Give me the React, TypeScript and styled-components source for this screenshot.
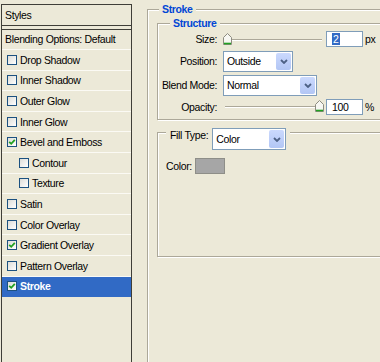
import React from 'react';
import styled, { createGlobalStyle } from 'styled-components';

const GlobalStyle = createGlobalStyle`
  html, body {
    margin: 0;
    padding: 0;
    background: #ece9d8;
  }
  body {
    font-family: "Liberation Sans", Arial, sans-serif;
    font-size: 10.5px;
    letter-spacing: -0.35px;
    color: #000;
  }
`;

const Window = styled.div`
  display: flex;
  width: 380px;
  height: 362px;
  overflow: hidden;
  background: #ece9d8;
`;

/* left list of layer styles */

const StylesPanel = styled.div`
  flex: 0 0 auto;
  box-sizing: border-box;
  width: 131px;
  margin: 4px 0 0 1px;
  border: 1px solid #3f3e38;
  border-bottom: none;
  display: flex;
  flex-direction: column;
`;

const PanelHeader = styled.div`
  height: 20px;
  line-height: 20px;
  padding-left: 3px;
  border-bottom: 1px solid #3f3e38;
`;

const BlendingRow = styled.div`
  height: 19px;
  line-height: 19px;
  padding-left: 3px;
  margin-top: 3px;
  border-top: 1px solid #3f3e38;
  border-bottom: 1px solid #fbfaf4;
`;

const StyleRow = styled.div<{ $indent?: boolean; $selected?: boolean }>`
  box-sizing: border-box;
  height: 20.6px;
  display: flex;
  align-items: center;
  gap: 3px;
  padding-left: ${p => (p.$indent ? '17px' : '5px')};
  border-bottom: 1px solid ${p => (p.$selected ? '#316ac5' : '#fbfaf4')};
  background: ${p => (p.$selected ? '#316ac5' : 'transparent')};
  color: ${p => (p.$selected ? '#fff' : '#000')};
  font-weight: ${p => (p.$selected ? 'bold' : 'normal')};
`;

const CheckBox = styled.span`
  flex: 0 0 auto;
  box-sizing: border-box;
  width: 10px;
  height: 10px;
  border: 1px solid #1c5180;
  background: linear-gradient(135deg, #dcdcd7, #ffffff);
  display: flex;
  align-items: center;
  justify-content: center;
`;

function Check({ on }: { on: boolean }) {
  return (
    <CheckBox>
      {on && (
        <svg width="8" height="8" viewBox="0 0 8 8">
          <path d="M1.2 3.8 L3.2 5.8 L6.8 1.8" fill="none" stroke="#21a121" strokeWidth="1.8" />
        </svg>
      )}
    </CheckBox>
  );
}

/* right settings area */

const Settings = styled.div`
  flex: 0 0 auto;
  padding: 3px 0 0 15px;
`;

const Group = styled.fieldset`
  box-sizing: border-box;
  margin: 0;
  padding: 0;
  min-width: 0;
  border: 1px solid #aca899;
  box-shadow: inset 1px 1px #fff, 1px 1px #fff;
`;

const OuterGroup = styled(Group)`
  width: 260px;
  height: 400px;
`;

const StructureGroup = styled(Group)`
  width: 250px;
  margin: 1px 0 0 9px;
`;

const FillGroup = styled(Group)`
  width: 250px;
  height: 129px;
  margin: 8px 0 0 9px;
`;

const GroupTitle = styled.legend<{ $offset: number }>`
  margin-left: ${p => p.$offset}px;
  padding: 0 3px;
  line-height: 13px;
  font-weight: bold;
  color: #0046d5;
  background: #ece9d8;
`;

const FillLegend = styled.legend`
  margin-left: 8px;
  padding: 0 4px;
  height: 8px;
  background: #ece9d8;
  display: flex;
  align-items: flex-start;
  gap: 4px;
`;

const FillLabel = styled.span`
  line-height: 13px;
  margin-top: 1px;
`;

const FormGrid = styled.div`
  display: grid;
  grid-template-columns: 59px auto;
  grid-template-rows: 16px 20px 20px 15px;
  column-gap: 6px;
  row-gap: 4px;
  align-items: center;
  padding: 1px 0 5px;
`;

const FieldLabel = styled.span`
  text-align: right;
`;

const Controls = styled.div<{ $gap?: number }>`
  display: flex;
  align-items: center;
  gap: ${p => p.$gap ?? 3}px;
`;

const SliderTrack = styled.div`
  position: relative;
  width: 101px;
  height: 13px;

  &::before {
    content: '';
    position: absolute;
    left: 2px;
    right: 2px;
    top: 6px;
    height: 1px;
    background: #aca899;
    border-bottom: 1px solid #fff;
  }
`;

const Thumb = styled.svg<{ $pos: number }>`
  position: absolute;
  top: 0;
  left: ${p => p.$pos * 92}px;
`;

function Slider({ pos }: { pos: number }) {
  return (
    <SliderTrack>
      <Thumb $pos={pos} width="9" height="12" viewBox="0 0 9 12">
        <path d="M0.5 4.5 L4.5 0.5 L8.5 4.5 L8.5 11.5 L0.5 11.5 Z" fill="#f7f7f2" stroke="#8d8c80" />
        <path d="M1 10.5 H8" stroke="#21a121" strokeWidth="1.6" />
      </Thumb>
    </SliderTrack>
  );
}

const NumberField = styled.div`
  box-sizing: border-box;
  width: 37px;
  height: 16px;
  border: 1px solid #7f9db9;
  background: #fff;
  padding-left: 5px;
  line-height: 14px;
`;

const Selected = styled.span`
  background: #316ac5;
  color: #fff;
  padding: 0 1px;
`;

const SelectBox = styled.div<{ $width: number; $height?: number }>`
  box-sizing: border-box;
  width: ${p => p.$width}px;
  height: ${p => p.$height ?? 21}px;
  border: 1px solid #7f9db9;
  background: #fff;
  display: flex;
  align-items: center;
  justify-content: space-between;
  padding: 1px 1px 1px 3px;
`;

const SelectArrow = styled.span`
  align-self: stretch;
  width: 15px;
  border-radius: 2px;
  background: linear-gradient(#cbd9fd, #b2c6f5);
  display: flex;
  align-items: center;
  justify-content: center;
`;

function Select({ value, width, height }: { value: string; width: number; height?: number }) {
  return (
    <SelectBox $width={width} $height={height}>
      <span>{value}</span>
      <SelectArrow>
        <svg width="8" height="5" viewBox="0 0 8 5">
          <path d="M1 1 L4 4 L7 1" fill="none" stroke="#4d6185" strokeWidth="1.8" />
        </svg>
      </SelectArrow>
    </SelectBox>
  );
}

const FillBody = styled.div`
  display: flex;
  align-items: center;
  gap: 3px;
  padding: 22px 0 0 8px;
`;

const Swatch = styled.div`
  box-sizing: border-box;
  width: 30px;
  height: 16px;
  border: 1px solid #8e8e88;
  background: #a6a6a6;
`;

const styleItems: { name: string; on: boolean; indent?: boolean; selected?: boolean }[] = [
  { name: 'Drop Shadow', on: false },
  { name: 'Inner Shadow', on: false },
  { name: 'Outer Glow', on: false },
  { name: 'Inner Glow', on: false },
  { name: 'Bevel and Emboss', on: true },
  { name: 'Contour', on: false, indent: true },
  { name: 'Texture', on: false, indent: true },
  { name: 'Satin', on: false },
  { name: 'Color Overlay', on: false },
  { name: 'Gradient Overlay', on: true },
  { name: 'Pattern Overlay', on: false },
  { name: 'Stroke', on: true, selected: true },
];

export default function App() {
  return (
    <>
      <GlobalStyle />
      <Window>
        <StylesPanel>
          <PanelHeader>Styles</PanelHeader>
          <BlendingRow>Blending Options: Default</BlendingRow>
          {styleItems.map(item => (
            <StyleRow key={item.name} $indent={item.indent} $selected={item.selected}>
              <Check on={item.on} />
              {item.name}
            </StyleRow>
          ))}
        </StylesPanel>

        <Settings>
          <OuterGroup>
            <GroupTitle $offset={11}>Stroke</GroupTitle>
            <StructureGroup>
              <GroupTitle $offset={12}>Structure</GroupTitle>
              <FormGrid>
                <FieldLabel>Size:</FieldLabel>
                <Controls $gap={2}>
                  <Slider pos={0} />
                  <NumberField>
                    <Selected>2</Selected>
                  </NumberField>
                  <span>px</span>
                </Controls>
                <FieldLabel>Position:</FieldLabel>
                <Controls>
                  <Select value="Outside" width={70} />
                </Controls>
                <FieldLabel>Blend Mode:</FieldLabel>
                <Controls>
                  <Select value="Normal" width={94} />
                </Controls>
                <FieldLabel>Opacity:</FieldLabel>
                <Controls $gap={2}>
                  <Slider pos={1} />
                  <NumberField>100</NumberField>
                  <span>%</span>
                </Controls>
              </FormGrid>
            </StructureGroup>

            <FillGroup>
              <FillLegend>
                <FillLabel>Fill Type:</FillLabel>
                <Select value="Color" width={74} height={22} />
              </FillLegend>
              <FillBody>
                <span>Color:</span>
                <Swatch />
              </FillBody>
            </FillGroup>
          </OuterGroup>
        </Settings>
      </Window>
    </>
  );
}
